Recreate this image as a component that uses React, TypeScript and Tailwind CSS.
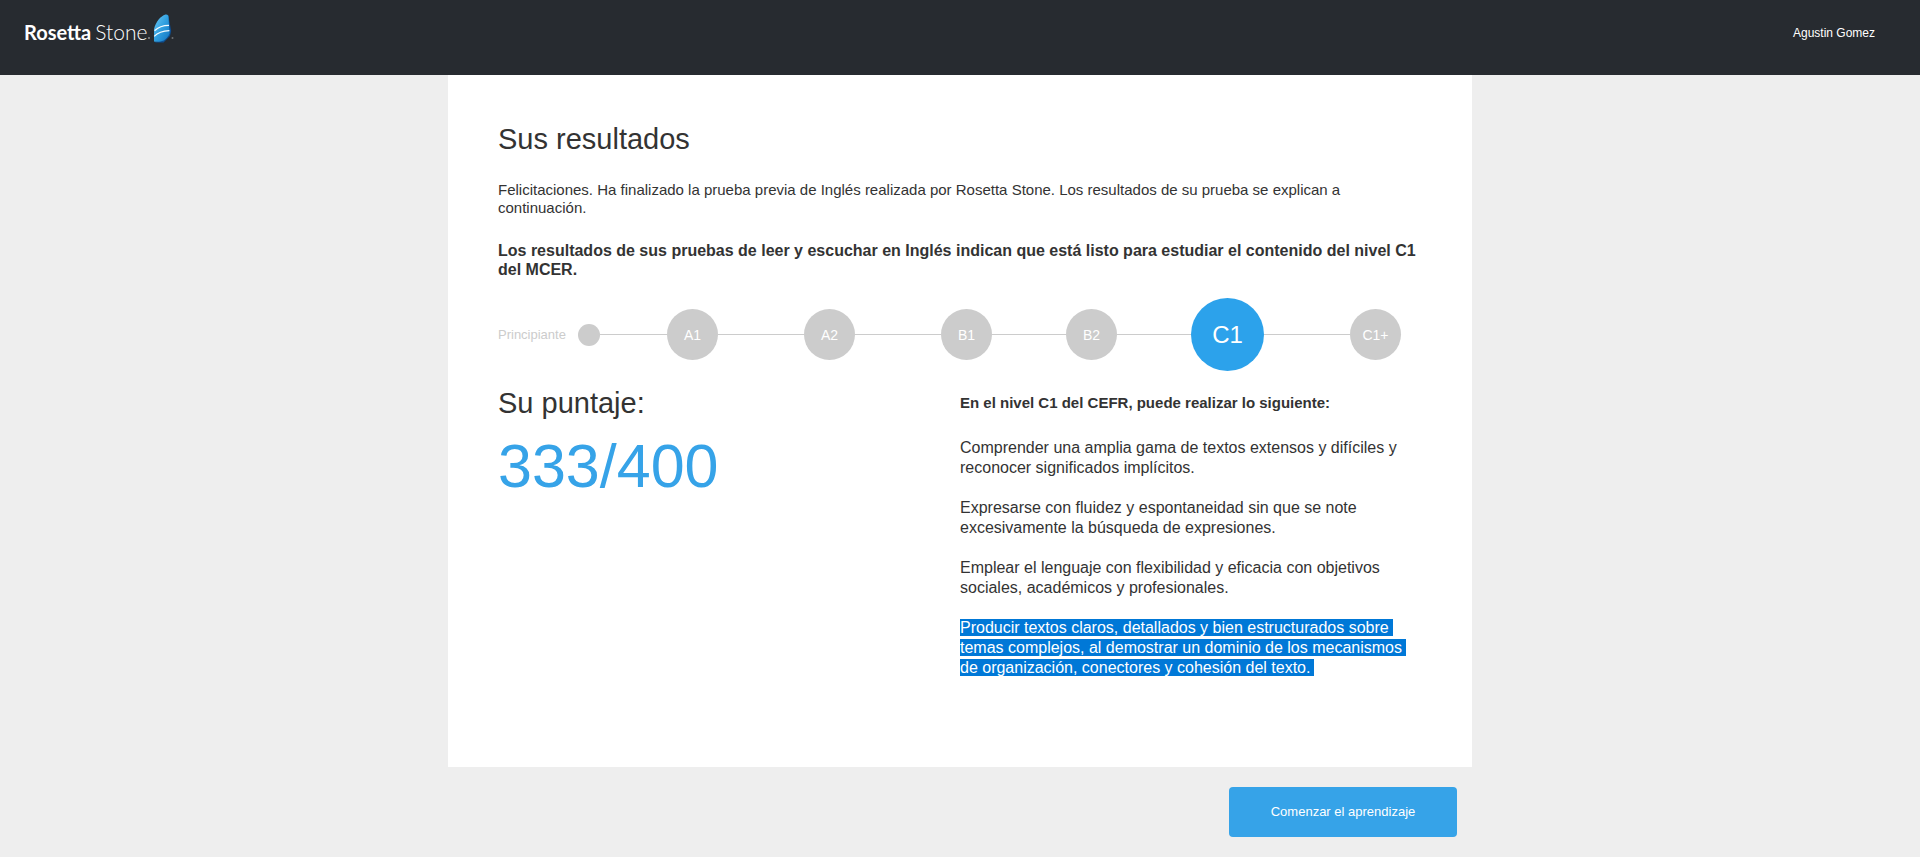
const steps = [
  { label: 'A1', line: 'flex-[67]', circle: 'size-[51px] bg-[#cccccc] text-sm' },
  { label: 'A2', line: 'flex-[86]', circle: 'size-[51px] bg-[#cccccc] text-sm' },
  { label: 'B1', line: 'flex-[86]', circle: 'size-[51px] bg-[#cccccc] text-sm' },
  { label: 'B2', line: 'flex-[74]', circle: 'size-[51px] bg-[#cccccc] text-sm' },
  { label: 'C1', line: 'flex-[74]', circle: 'size-[73px] bg-[#2ca2eb] text-2xl', current: true },
  { label: 'C1+', line: 'flex-[86]', circle: 'size-[51px] bg-[#cccccc] text-sm' },
];

function Logo() {
  return (
    <a href="#" aria-label="Rosetta Stone" className="flex items-start text-white">
      <span className="mt-[6px] flex items-baseline gap-1 font-['Lato','Open_Sans',sans-serif] text-[21px] leading-6">
        <span className="text-xl leading-6 font-bold">Rosetta</span>
        <span className="font-light">Stone</span>
      </span>
      <svg width="27" height="30" viewBox="0 0 27 30" aria-hidden="true">
        <defs>
          <linearGradient id="stone" x1="0" y1="0" x2="1" y2="1">
            <stop offset="0" stopColor="#6fc9f2" />
            <stop offset="0.5" stopColor="#2f9fe0" />
            <stop offset="1" stopColor="#1272bd" />
          </linearGradient>
        </defs>
        <circle cx="2" cy="24" r="1" fill="#8b8e91" />
        <circle cx="25.5" cy="24" r="1" fill="#6d7073" />
        <path d="M18 0.8 L21.5 2.5 L24.2 17 L23 22 L16.5 28.4 L7.5 28.4 L15 26 Z" fill="#0d4f93" />
        <path d="M18.5 0.6 C13.5 2.4 9 7.5 7 15 L7 27.6 C10.5 28.3 14 27.4 16.8 26.4 C19.5 24.5 21.6 22 22.6 19.4 L21.4 1.8 C20.6 0.7 19.5 0.3 18.5 0.6 Z" fill="url(#stone)" />
        <path d="M7.6 16.8 C11 13.2 16 11.4 22 11.4" stroke="#f2fbff" strokeWidth="1.3" fill="none" />
        <path d="M7.2 22.4 C10.5 18.8 15.5 16.8 22.4 16.6" stroke="#f2fbff" strokeWidth="1.3" fill="none" />
      </svg>
    </a>
  );
}

export default function App() {
  return (
    <div className="min-h-screen bg-[#eeeeee] font-['Liberation_Sans',Arial,sans-serif] text-[#333333]">
      <header className="flex h-[75px] items-start justify-between bg-[#272b30] pt-[14px] pr-[45px] pl-6">
        <Logo />
        <a href="#" className="mt-[10px] text-xs leading-[18px] text-white">Agustin Gomez</a>
      </header>

      <main className="mx-auto max-w-5xl">
        <section className="bg-white px-[50px] pt-11 pb-[89px]">
          <h1 className="text-[29px] leading-10">Sus resultados</h1>
          <p className="mt-[22px] text-[15px] leading-[18px]">
            Felicitaciones. Ha finalizado la prueba previa de Inglés realizada por Rosetta Stone. Los resultados de su prueba se explican a
            <br />
            continuación.
          </p>
          <p className="mt-6 text-base leading-[19px] font-bold">
            Los resultados de sus pruebas de leer y escuchar en Inglés indican que está listo para estudiar el contenido del nivel C1
            <br />
            del MCER.
          </p>

          <ol className="mt-[19px] flex items-center pr-[21px]">
            <li className="flex items-center">
              <span className="w-20 text-[13px] text-[#cccccc]">Principiante</span>
              <span className="size-[22px] rounded-full bg-[#cccccc]" />
            </li>
            {steps.map((step) => (
              <li key={step.label} className="contents" aria-current={step.current ? 'step' : undefined}>
                <span className={`${step.line} h-px bg-[#cccccc]`} />
                <span className={`${step.circle} flex shrink-0 items-center justify-center rounded-full text-white`}>
                  {step.label}
                </span>
              </li>
            ))}
          </ol>

          <div className="mt-3 grid grid-cols-2">
            <div>
              <h2 className="text-[29px] leading-10">Su puntaje:</h2>
              <p className="mt-2 text-[61px] leading-[70px] text-[#36a3e8]">333/400</p>
            </div>
            <div className="mt-[10px] flex flex-col gap-5 text-base leading-5">
              <h3 className="mb-[5px] text-[15px] leading-5 font-bold">En el nivel C1 del CEFR, puede realizar lo siguiente:</h3>
              <p>
                Comprender una amplia gama de textos extensos y difíciles y
                <br />
                reconocer significados implícitos.
              </p>
              <p>
                Expresarse con fluidez y espontaneidad sin que se note
                <br />
                excesivamente la búsqueda de expresiones.
              </p>
              <p>
                Emplear el lenguaje con flexibilidad y eficacia con objetivos
                <br />
                sociales, académicos y profesionales.
              </p>
              <p>
                <mark className="bg-[#0078d7] box-decoration-clone pr-1 text-white">
                  Producir textos claros, detallados y bien estructurados sobre
                  <br />
                  temas complejos, al demostrar un dominio de los mecanismos
                  <br />
                  de organización, conectores y cohesión del texto.
                </mark>
              </p>
            </div>
          </div>
        </section>

        <div className="flex justify-end py-5 pr-[15px]">
          <button type="button" className="h-[50px] min-w-[228px] rounded bg-[#36a3e8] px-10 text-[13px] text-white">
            Comenzar el aprendizaje
          </button>
        </div>
      </main>
    </div>
  );
}
